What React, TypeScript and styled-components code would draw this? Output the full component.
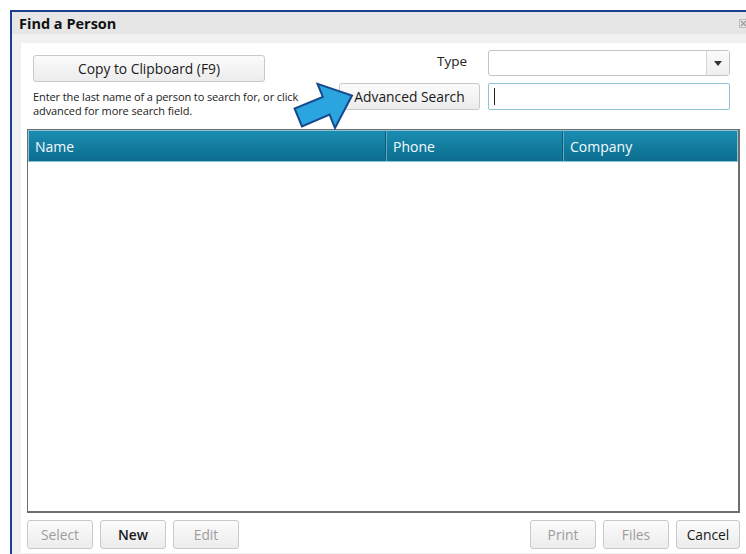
import styled, { createGlobalStyle } from "styled-components";

const GlobalStyle = createGlobalStyle`
  html, body {
    margin: 0;
    padding: 0;
    background: #ffffff;
    overflow: hidden;
  }
  body {
    font-family: "Open Sans", "Noto Sans", sans-serif;
  }
`;

const Screen = styled.div`
  width: 746px;
  height: 554px;
  padding: 10px 0 0 10px;
  box-sizing: border-box;
  position: relative;
  overflow: hidden;
`;

const Window = styled.div`
  height: 560px;
  border-top: 2px solid #1d3f92;
  border-left: 2px solid #1d3f92;
  background: #f1f1f1;
  display: flex;
  flex-direction: column;
`;

const TitleBar = styled.div`
  height: 22px;
  flex-shrink: 0;
  background: #e6e6e6;
  display: flex;
  align-items: center;
  justify-content: space-between;
  padding-left: 7px;
  font-size: 14.5px;
  font-weight: 700;
  color: #111;
`;

const CloseMark = styled.svg`
  width: 9px;
  height: 9px;
  margin-right: -2px;
`;

const Panel = styled.div`
  margin: 9px 0 0 9px;
  height: 510px;
  flex-shrink: 0;
  box-sizing: border-box;
  background: #ffffff;
  padding: 7px 6px 0 6px;
  display: flex;
  flex-direction: column;
`;

const TopArea = styled.div`
  display: flex;
  padding-left: 6px;
`;

const LeftBlock = styled.div`
  width: 306px;
  padding-top: 5px;
`;

const Middle = styled.div`
  width: 141px;
  display: flex;
  flex-direction: column;
  gap: 7px;
`;

const Right = styled.div`
  width: 242px;
  margin-left: 8px;
  display: flex;
  flex-direction: column;
  gap: 7px;
`;

const Button = styled.button<{ $disabled?: boolean; $width?: number; $bold?: boolean; $tall?: boolean }>`
  width: ${(p) => (p.$width ? `${p.$width}px` : "auto")};
  height: ${(p) => (p.$tall ? "29px" : "27px")};
  flex-shrink: 0;
  padding: 0;
  border: 1px solid #c9c9c9;
  border-radius: 3px;
  background: linear-gradient(#fbfbfb, #ececec);
  font-family: "Open Sans", "Noto Sans", sans-serif;
  font-size: 13.8px;
  font-weight: ${(p) => (p.$bold ? 600 : 400)};
  color: ${(p) => (p.$disabled ? "#9d9d9d" : "#1a1a1a")};
  cursor: default;
`;

const HelpText = styled.div`
  margin-top: 8px;
  font-size: 11px;
  line-height: 14px;
  color: #222;
  letter-spacing: -0.1px;
`;

const TypeLabel = styled.div`
  height: 26px;
  box-sizing: border-box;
  display: flex;
  align-items: center;
  justify-content: flex-end;
  padding: 0 13px 4px 0;
  font-size: 13.5px;
  color: #222;
`;

const Select = styled.div`
  height: 26px;
  box-sizing: border-box;
  border: 1px solid #c3c3c3;
  border-radius: 3px;
  background: #fff;
  display: flex;
  justify-content: flex-end;
`;

const SelectArrow = styled.div`
  width: 22px;
  border-left: 1px solid #d6d6d6;
  background: linear-gradient(#fbfbfb, #eeeeee);
  display: flex;
  align-items: center;
  justify-content: center;
  &::after {
    content: "";
    border-left: 4px solid transparent;
    border-right: 4px solid transparent;
    border-top: 5px solid #333;
  }
`;

const SearchInput = styled.div`
  height: 27px;
  box-sizing: border-box;
  border: 1px solid #8fc3da;
  border-radius: 2px;
  background: #fff;
  display: flex;
  align-items: center;
  padding-left: 5px;
  &::before {
    content: "";
    width: 1px;
    height: 17px;
    background: #222;
  }
`;

const Table = styled.div`
  margin-top: 11px;
  height: 384px;
  flex-shrink: 0;
  box-sizing: border-box;
  border: 1px solid #6e6e6e;
  border-right-width: 2px;
  border-bottom-width: 2px;
  display: flex;
  flex-direction: column;
`;

const HeaderRow = styled.div`
  display: grid;
  grid-template-columns: 358px 177px 1fr;
  height: 30px;
  border: 1px solid #8cc2d6;
  background: linear-gradient(#1a8db1, #0d6d8f);
`;

const HeaderCell = styled.div`
  display: flex;
  align-items: center;
  padding-left: 6px;
  font-size: 14px;
  color: #f4fbff;
  border-right: 1px solid #5fa9c4;
  box-shadow: inset -1px 0 0 #0b5f7d;
  &:last-child {
    border-right: none;
    box-shadow: none;
  }
`;

const TableBody = styled.div`
  flex: 1;
  background: #fff;
`;

const Footer = styled.div`
  display: flex;
  gap: 7px;
  margin-top: 7px;
`;

const Spacer = styled.div`
  flex: 1;
`;

const Pointer = styled.svg`
  position: absolute;
  left: 290px;
  top: 78px;
  width: 66px;
  height: 52px;
`;

export default function App() {
  return (
    <>
      <GlobalStyle />
      <Screen>
        <Window>
          <TitleBar>
            Find a Person
            <CloseMark viewBox="0 0 9 9">
              <rect x="0.5" y="0.5" width="8" height="8" fill="none" stroke="#b5b5b5" strokeWidth="0.8" />
              <path d="M2 2 L7 7 M7 2 L2 7" stroke="#9a9a9a" strokeWidth="1.2" />
            </CloseMark>
          </TitleBar>
          <Panel>
            <TopArea>
              <LeftBlock>
                <Button $width={232}>Copy to Clipboard (F9)</Button>
                <HelpText>
                  Enter the last name of a person to search for, or click
                  <br />
                  advanced for more search field.
                </HelpText>
              </LeftBlock>
              <Middle>
                <TypeLabel>Type</TypeLabel>
                <Button $width={141}>Advanced Search</Button>
              </Middle>
              <Right>
                <Select>
                  <SelectArrow />
                </Select>
                <SearchInput />
              </Right>
            </TopArea>
            <Table>
              <HeaderRow>
                <HeaderCell>Name</HeaderCell>
                <HeaderCell>Phone</HeaderCell>
                <HeaderCell>Company</HeaderCell>
              </HeaderRow>
              <TableBody />
            </Table>
            <Footer>
              <Button $tall $width={66} $disabled>Select</Button>
              <Button $tall $width={66} $bold>New</Button>
              <Button $tall $width={66} $disabled>Edit</Button>
              <Spacer />
              <Button $tall $width={66} $disabled>Print</Button>
              <Button $tall $width={66} $disabled>Files</Button>
              <Button $tall $width={64}>Cancel</Button>
            </Footer>
          </Panel>
        </Window>
        <Pointer viewBox="290 78 66 52">
          <polygon
            points="302,126.5 294.6,108.5 322.8,97 317.5,83.8 352,95.5 335,128 329.6,114.6"
            fill="#2aa5e0"
            stroke="#17498f"
            strokeWidth="2"
            strokeLinejoin="miter"
          />
        </Pointer>
      </Screen>
    </>
  );
}
